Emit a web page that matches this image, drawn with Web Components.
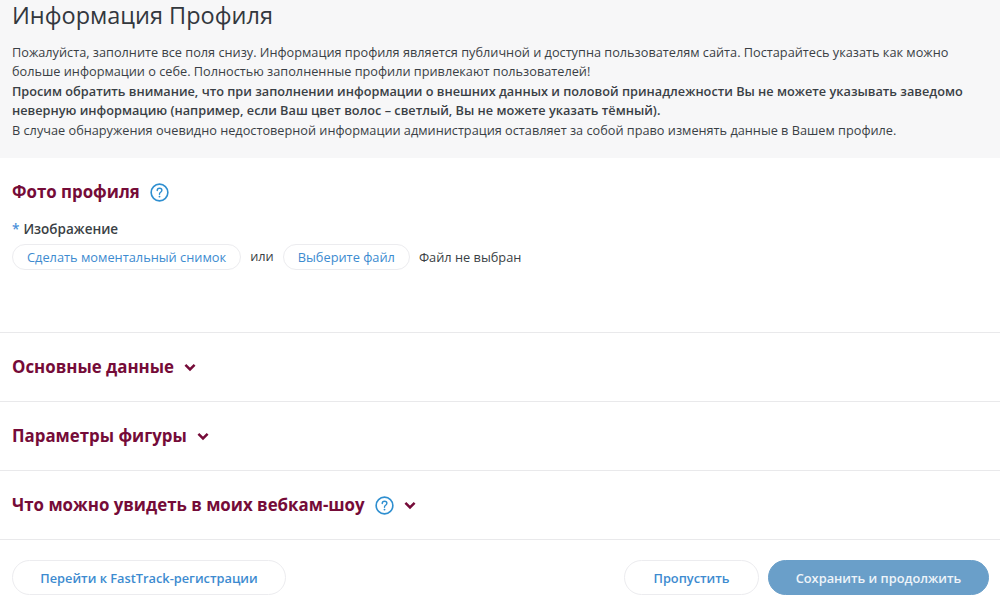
<!DOCTYPE html>
<html lang="ru"><head><meta charset="utf-8">
<style>
html,body{margin:0;padding:0;background:#fff;overflow:hidden}
body{width:1000px;height:600px;font-family:"Open Sans","Noto Sans",sans-serif;color:#33383e}
</style></head><body>
<profile-page></profile-page>
<script>
const HELP=(s)=>`<svg width="${s}" height="${s}" viewBox="0 0 20 20" fill="none"><circle cx="10" cy="10" r="8.8" stroke="#2f8fd0" stroke-width="1.7"/><path d="M7.6 7.9c0-1.4 1-2.3 2.5-2.3s2.4.9 2.4 2.1c0 1-.6 1.5-1.3 2-.7.5-1.2.9-1.2 1.8v.4" stroke="#2f8fd0" stroke-width="1.5" stroke-linecap="round"/><circle cx="10" cy="14.3" r="1" fill="#2f8fd0"/></svg>`;
class IntroBox extends HTMLElement{constructor(){super();this.attachShadow({mode:'open'}).innerHTML=`<style>
:host{display:block;background:#f7f7f8;height:158px;box-sizing:border-box;padding:0 12px;overflow:hidden}
h1{margin:0;font:400 23.5px/31px "Open Sans",sans-serif;color:#33383e;height:43px}
.t{font-size:12.72px;line-height:19.4px;color:#3a3f45;white-space:nowrap}
::slotted(b){font-weight:600}
</style><h1><slot name="title"></slot></h1><div class="t"><slot></slot></div>`}}
class SectionTitle extends HTMLElement{constructor(){super();const help=this.hasAttribute('help'),ch=this.hasAttribute('chevron');this.attachShadow({mode:'open'}).innerHTML=`<style>
:host{display:flex;align-items:center;font:700 16.85px/24px "Open Sans",sans-serif;color:#750b38}
.h{display:flex;margin-left:10px}
.c{display:flex;margin-left:10px}
</style><slot></slot>${help?`<span class="h">${HELP(19)}</span>`:''}${ch?`<span class="c"><svg width="12" height="9" viewBox="0 0 12 9" fill="none"><path d="M1.4 1.8 6 6.4 10.600 1.800" stroke="#750b38" stroke-width="2.500"/></svg></span>`:''}`}}
class CollapseRow extends HTMLElement{constructor(){super();this.attachShadow({mode:'open'}).innerHTML=`<style>
:host{display:flex;align-items:center;height:69px;box-sizing:border-box;border-top:1px solid #e9e9eb;padding:0 12px}
</style><slot></slot>`}}
class PillButton extends HTMLElement{constructor(){super();this.attachShadow({mode:'open'}).innerHTML=`<style>
:host{display:inline-flex;align-items:center;justify-content:center;box-sizing:border-box;border:1px solid #ececef;border-radius:20px;color:#3d8bd0;background:#fff;white-space:nowrap;height:26px;font-size:12.8px;padding:0 14px}
:host([big]){height:35px;border-radius:18px;font-weight:600}
:host([primary]){background:#6a9fc9;border-color:#6a9fc9;color:#eef4f9}
</style><slot></slot>`}}
class PhotoSection extends HTMLElement{constructor(){super();this.attachShadow({mode:'open'}).innerHTML=`<style>
:host{display:block;height:174px;box-sizing:border-box;padding:22px 12px 0}
.l{margin-top:15px;font-size:13.5px;font-weight:600;line-height:20px;color:#3a3f45}
.l i{font-style:normal;color:#4a90d9;margin-right:4px}
.r{display:flex;align-items:center;margin-top:5px;font-size:12.8px;color:#3a3f45}
.or{margin:0 9px 2px 9px}
.f{margin-left:9px}
</style><slot name="title"></slot><div class="l"><i>*</i>Изображение</div><div class="r"><slot name="snap"></slot><span class="or">или</span><slot name="file"></slot><span class="f">Файл не выбран</span></div>`}}
class ActionBar extends HTMLElement{constructor(){super();this.attachShadow({mode:'open'}).innerHTML=`<style>
:host{display:flex;align-items:center;justify-content:space-between;border-top:1px solid #e9e9eb;height:61px;box-sizing:border-box;padding:15px 11px 0 12px}
.g{display:flex;gap:9px}
</style><slot name="left"></slot><div class="g"><slot name="right"></slot></div>`}}
class ProfilePage extends HTMLElement{constructor(){super();this.attachShadow({mode:'open'}).innerHTML=`<style>
:host{display:block;width:1000px;height:600px;overflow:hidden}
</style>
<intro-box><span slot="title">Информация Профиля</span>Пожалуйста, заполните все поля снизу. Информация профиля является публичной и доступна пользователям сайта. Постарайтесь указать как можно<br>больше информации о себе. Полностью заполненные профили привлекают пользователей!<br><b>Просим обратить внимание, что при заполнении информации о внешних данных и половой принадлежности Вы не можете указывать заведомо<br>неверную информацию (например, если Ваш цвет волос – светлый, Вы не можете указать тёмный).</b><br>В случае обнаружения очевидно недостоверной информации администрация оставляет за собой право изменять данные в Вашем профиле.</intro-box>
<photo-section><section-title slot="title" help>Фото профиля</section-title><pill-button slot="snap">Сделать моментальный снимок</pill-button><pill-button slot="file">Выберите файл</pill-button></photo-section>
<collapse-row><section-title chevron>Основные данные</section-title></collapse-row>
<collapse-row><section-title chevron>Параметры фигуры</section-title></collapse-row>
<collapse-row><section-title help chevron>Что можно увидеть в моих вебкам-шоу</section-title></collapse-row>
<action-bar><pill-button slot="left" big style="width:274px">Перейти к FastTrack-регистрации</pill-button><pill-button slot="right" big style="width:135px">Пропустить</pill-button><pill-button slot="right" big primary style="width:221px">Сохранить и продолжить</pill-button></action-bar>`}}
customElements.define('intro-box',IntroBox);
customElements.define('section-title',SectionTitle);
customElements.define('collapse-row',CollapseRow);
customElements.define('pill-button',PillButton);
customElements.define('photo-section',PhotoSection);
customElements.define('action-bar',ActionBar);
customElements.define('profile-page',ProfilePage);
</script></body></html>
